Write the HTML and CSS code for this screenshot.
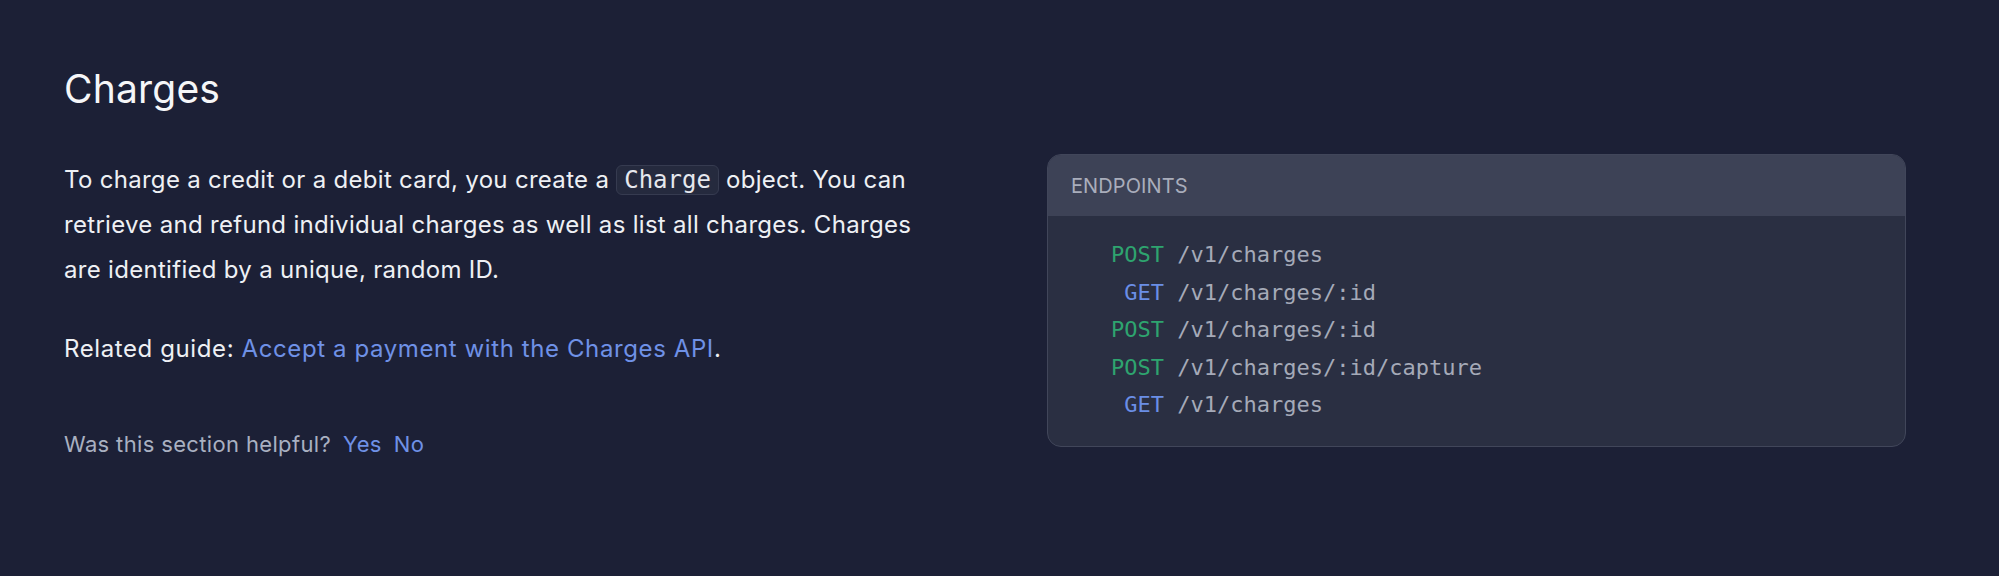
FILE: index.html
```html
<!DOCTYPE html>
<html lang="en">
<head>
<meta charset="utf-8">
<title>Charges</title>
<link rel="stylesheet" href="styles.css">
</head>
<body>
<section class="section">
  <h2 class="title">Charges</h2>
  <div class="columns">
    <div class="text-col">
      <p class="para">To charge a credit or a debit card, you create a <code class="inline-code">Charge</code> object. You can retrieve and refund individual charges as well as list all charges. Charges are identified by a unique, random ID.</p>
      <p class="para related">Related guide: <a class="link" href="#">Accept a payment with the Charges API</a>.</p>
      <div class="feedback">
        <span class="feedback-q">Was this section helpful?</span>
        <a class="link feedback-btn" href="#">Yes</a>
        <a class="link feedback-btn" href="#">No</a>
      </div>
    </div>
    <div class="card">
      <div class="card-head">ENDPOINTS</div>
      <div class="card-body">
        <div class="ep"><span class="m post">POST</span> <span class="p">/v1/charges</span></div>
        <div class="ep"><span class="m get"> GET</span> <span class="p">/v1/charges/:id</span></div>
        <div class="ep"><span class="m post">POST</span> <span class="p">/v1/charges/:id</span></div>
        <div class="ep"><span class="m post">POST</span> <span class="p">/v1/charges/:id/capture</span></div>
        <div class="ep"><span class="m get"> GET</span> <span class="p">/v1/charges</span></div>
      </div>
    </div>
  </div>
</section>
</body>
</html>
```
FILE: styles.css
```css
html, body {
  margin: 0;
  padding: 0;
  background: #1c2036;
}
body {
  font-family: Inter, "Noto Sans", sans-serif;
  color: #f0f2f6;
  height: 576px;
  overflow: hidden;
}
.section {
  padding: 66px 0 0 64px;
}
.title {
  margin: 0;
  font-size: 39px;
  line-height: 46px;
  font-weight: 400;
  color: #f5f6f8;
  letter-spacing: 0.2px;
}
.columns {
  display: grid;
  grid-template-columns: 859px 859px;
  column-gap: 124px;
  margin-top: 45px;
  align-items: start;
}
.para {
  margin: 0;
  font-size: 24px;
  line-height: 45px;
  color: #eef0f4;
  letter-spacing: 0.3px;
}
.related {
  margin-top: 34px;
  letter-spacing: 0.6px;
}
.inline-code {
  font-family: "DejaVu Sans Mono", "Liberation Mono", monospace;
  font-size: 24px;
  line-height: 28px;
  color: #e6e8ee;
  background: #252a3e;
  border: 1px solid #363b50;
  border-radius: 6px;
  padding: 0 7px;
  letter-spacing: 0;
  display: inline-block;
}
.link {
  color: #6f91e6;
  text-decoration: none;
}
.feedback {
  margin-top: 57px;
  display: flex;
  align-items: baseline;
  font-size: 22px;
  line-height: 33px;
  letter-spacing: 0.35px;
}
.feedback-q {
  color: #a9b0c1;
  margin-right: 12px;
}
.feedback-btn {
  margin-right: 12px;
}
.card {
  margin-top: -3px;
  border: 1px solid #41465a;
  border-radius: 14px;
  overflow: hidden;
  background: #2a2f42;
}
.card-head {
  background: #3d4256;
  height: 61px;
  display: flex;
  align-items: center;
  padding-left: 23px;
  font-size: 20px;
  color: #a9adbb;
  letter-spacing: 0.1px;
}
.card-body {
  padding: 20px 0 22px 63px;
  font-family: "DejaVu Sans Mono", "Liberation Mono", monospace;
  font-size: 22px;
  line-height: 37.5px;
}
.ep {
  white-space: pre;
}
.m.post { color: #2ea46f; }
.m.get { color: #6a8ee6; }
.p { color: #a5aab8; }
```
